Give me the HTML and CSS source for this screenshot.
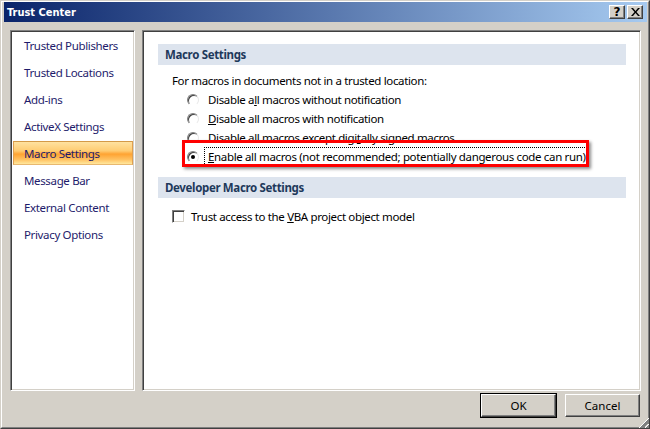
FILE: index.html
```html
<!DOCTYPE html>
<html>
<head>
<meta charset="utf-8">
<link rel="stylesheet" href="styles.css">
</head>
<body>
<div class="window">
  <div class="titlebar">
    <span class="title">Trust Center</span>
    <div class="tbtns">
      <span class="tbtn">?</span>
      <span class="tbtn close">
        <svg width="9" height="8" viewBox="0 0 9 8"><path d="M0 0h2l2.5 3 2.5-3h2l-3.5 4 3.5 4h-2l-2.5-3-2.5 3h-2l3.5-4z" fill="#000"/></svg>
      </span>
    </div>
  </div>
  <div class="body">
    <div class="panel nav">
      <div class="navitem">Trusted Publishers</div>
      <div class="navitem">Trusted Locations</div>
      <div class="navitem">Add-ins</div>
      <div class="navitem">ActiveX Settings</div>
      <div class="navitem active">Macro Settings</div>
      <div class="navitem">Message Bar</div>
      <div class="navitem">External Content</div>
      <div class="navitem">Privacy Options</div>
    </div>
    <div class="panel main">
      <div class="section">Macro Settings</div>
      <div class="intro">For macros in documents not in a trusted location:</div>
      <div class="opt"><span class="radio"></span><span class="lbl">Disable a<u>l</u>l macros without notification</span></div>
      <div class="opt"><span class="radio"></span><span class="lbl"><u>D</u>isable all macros with notification</span></div>
      <div class="opt"><span class="radio"></span><span class="lbl">Disable all macros except digi<u>t</u>ally signed macros</span></div>
      <div class="opt sel"><span class="radio on"></span><span class="lbl focus"><u>E</u>nable all macros (not recommended; potentially dangerous code can run)</span><span class="redbox"></span></div>
      <div class="section dev">Developer Macro Settings</div>
      <div class="chkrow"><span class="chk"></span><span class="lbl">Trust access to the <u>V</u>BA project object model</span></div>
    </div>
  </div>
  <div class="footer">
    <button class="btn default">OK</button>
    <button class="btn">Cancel</button>
    <span class="grip"></span>
  </div>
</div>
</body>
</html>
```
FILE: styles.css
```css
html, body { margin: 0; padding: 0; background: #d4d0c8; }
.window {
  position: relative;
  width: 650px; height: 429px; box-sizing: border-box;
  border: 1px solid; border-color: #d4d0c8 #404040 #404040 #d4d0c8;
  background: #d4d0c8;
  display: flex; flex-direction: column;
  font-family: "Noto Sans", "Open Sans", sans-serif; font-size: 11.5px; letter-spacing: -0.35px; color: #000;
}
.window::before {
  content: ""; position: absolute; inset: 0; pointer-events: none;
  border: 1px solid; border-color: #fff #808080 #808080 #fff;
}
.titlebar {
  margin: 1px 2px 0 3px; height: 20px;
  background: linear-gradient(to right, #0a246a, #a6caf0);
  display: flex; align-items: center; justify-content: space-between;
  padding: 0 4px 0 3px;
}
.title { color: #fff; font: bold 11px "DejaVu Sans Condensed", "DejaVu Sans", sans-serif; font-stretch: condensed; letter-spacing: 0; }
.tbtns { display: flex; gap: 2px; }
.tbtn {
  width: 16px; height: 14px; box-sizing: border-box; background: #d4d0c8;
  border: 1px solid; border-color: #fff #404040 #404040 #fff;
  box-shadow: inset -1px -1px 0 #808080;
  display: flex; align-items: center; justify-content: center;
  font: bold 12px "DejaVu Sans", sans-serif; line-height: 1; letter-spacing: 0;
}
.body { display: flex; gap: 7px; padding: 8px 8px 0 9px; height: 361px; }
.panel {
  box-sizing: border-box; height: 361px; background: #fff;
  border: 1px solid; border-color: #808080 #fff #fff #808080;
  box-shadow: inset 1px 1px 0 #404040, inset -1px -1px 0 #d4d0c8;
}
.nav { width: 125px; padding: 2px 1px 0 2px; }
.navitem {
  height: 24px; margin-bottom: 3px; box-sizing: border-box;
  padding-left: 10px; display: flex; align-items: center;
  color: #1e1b6b; border: 1px solid transparent;
}
.navitem.active {
  border-color: #d49a48 #e0a050 #e8b870 #e0a050;
  background: linear-gradient(to bottom, #ffe2a0 0%, #ffcc72 40%, #ffa332 55%, #ffc262 80%, #ffe79e 100%);
}
.main { width: 499px; padding: 1px 0 0 2px; }
.section {
  margin: 12px 14px 0 13px; height: 21px; background: #dde4ee;
  padding-left: 7px; display: flex; align-items: center;
  font-weight: bold; color: #1e395b;
}
.section.dev { margin-top: 11px; }
.intro { margin: 7px 0 0 27px; height: 18px; line-height: 18px; }
.opt { position: relative; height: 19px; display: flex; align-items: center; margin-left: 42px; }
.radio {
  width: 12px; height: 12px; border-radius: 50%; box-sizing: border-box;
  border: 1px solid; border-color: #808080 #e8e8e8 #fff #808080;
  box-shadow: inset 1px 1px 0 #404040; background: #fff; margin-right: 9px; position: relative;
}
.radio.on::after {
  content: ""; position: absolute; left: 3px; top: 3px; width: 4px; height: 4px; border-radius: 50%; background: #000;
}
.lbl { line-height: 17px; }
.focus { outline: 1px dotted #000; outline-offset: 0; margin-left: -3px; padding: 0 2px 0 3px; }
.redbox {
  position: absolute; left: -5px; top: -7px; width: 407px; height: 27px; box-sizing: border-box;
  border: 3px solid #ff0000; box-shadow: 2px 2px 3px rgba(0,0,0,0.45);
}
.chkrow { display: flex; align-items: center; height: 20px; margin: 8px 0 0 27px; }
.chk {
  width: 13px; height: 13px; box-sizing: border-box; background: #fff;
  border: 1px solid; border-color: #808080 #fff #fff #808080;
  box-shadow: inset 1px 1px 0 #404040, inset -1px -1px 0 #d4d0c8; margin-right: 6px;
}
.footer { display: flex; justify-content: flex-end; gap: 9px; padding: 3px 9px 0 0; position: relative; flex: 1; }
.btn {
  width: 75px; height: 23px; box-sizing: border-box; background: #d4d0c8;
  font: 11.5px "Noto Sans", sans-serif; color: #000; padding: 0;
  border: 1px solid; border-color: #fff #404040 #404040 #fff;
  box-shadow: inset -1px -1px 0 #808080;
}
.btn.default { outline: 1px solid #000; outline-offset: 0; }
.grip {
  position: absolute; right: 0; bottom: 0; width: 12px; height: 12px;
  background: linear-gradient(135deg, transparent 0 55%, #fff 55% 62%, #808080 62% 75%, transparent 75% 80%, #fff 80% 86%, #808080 86% 100%);
}
```
